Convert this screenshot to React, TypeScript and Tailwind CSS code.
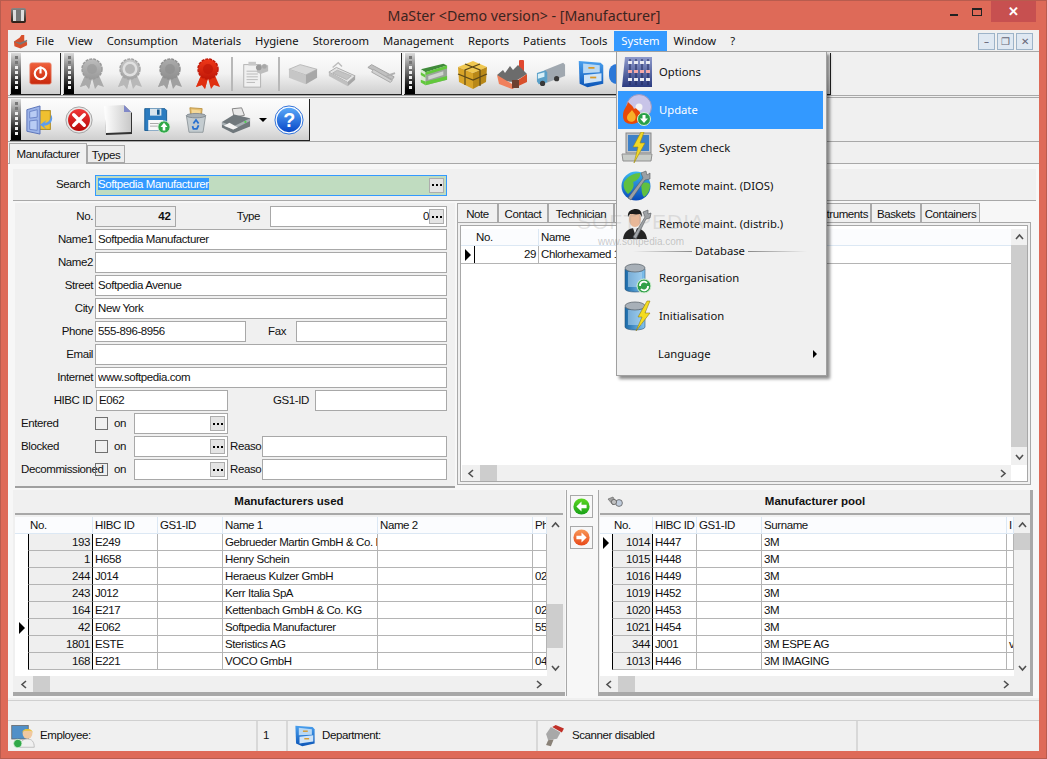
import type { ReactNode } from 'react'

// ─── Icons ────────────────────────────────────────────────────────────────────

function Svg({ s = 32, children }: { s?: number; children: ReactNode }) {
  return (
    <svg width={s} height={s} viewBox="0 0 32 32" className="shrink-0">
      {children}
    </svg>
  )
}

function Grad({ id, a, b, horizontal }: { id: string; a: string; b: string; horizontal?: boolean }) {
  return (
    <linearGradient id={id} x1="0" y1="0" x2={horizontal ? '1' : '0'} y2={horizontal ? '0' : '1'}>
      <stop offset="0" stopColor={a} />
      <stop offset="1" stopColor={b} />
    </linearGradient>
  )
}

function Power() {
  return (
    <Svg s={23}>
      <defs><Grad id="pw" a="#f0603c" b="#c8280c" /></defs>
      <rect x="1" y="1" width="30" height="30" rx="3" fill="url(#pw)" stroke="#e8a090" />
      <circle cx="16" cy="16" r="8" fill="none" stroke="#fff" strokeWidth="3" />
      <rect x="14.5" y="6" width="3" height="10" fill="#fff" />
    </Svg>
  )
}

function Ribbon({ id, a, b, tail, ring }: { id: string; a: string; b: string; tail: string; ring?: boolean }) {
  return (
    <Svg s={32}>
      <defs><Grad id={id} a={a} b={b} /></defs>
      <path d="M11 13 L4 29 L10 27 L13 31 L16 20 L19 31 L22 27 L28 29 L21 13Z" fill={tail} />
      <path d="M16 20 L13 31 L10 27 L4 29 L11 13Z" fill={tail} opacity="0.8" />
      <circle cx="16" cy="11" r="10" fill={`url(#${id})`} stroke={b} strokeWidth="1.5" strokeDasharray="3 1" />
      {ring && <circle cx="16" cy="11" r="7.5" fill="#e0e0e0" />}
      <circle cx="16" cy="11" r="5" fill={b} opacity="0.7" />
    </Svg>
  )
}

function ClipboardGray() {
  return (
    <Svg s={30}>
      <rect x="4" y="6" width="18" height="24" fill="#f0f0f0" stroke="#b0b0b0" />
      <path d="M7 13h12M7 16h12M7 19h12M7 22h12M7 25h9" stroke="#b8b8b8" />
      <rect x="9" y="3" width="8" height="4" fill="#c8c8c8" />
      <path d="M18 9l8-4 4 2v6l-8 3-4-2z" fill="#bdbdbd" />
      <circle cx="20" cy="9" r="3" fill="#9a9a9a" />
      <circle cx="26" cy="8" r="2.5" fill="#a8a8a8" />
    </Svg>
  )
}

function BoxGray() {
  return (
    <Svg s={30}>
      <path d="M1 11 L13 6 L31 11 L19 17Z" fill="#d8d8d8" stroke="#b8b8b8" />
      <path d="M1 11 L19 17 V27 L1 20Z" fill="#c6c6c6" />
      <path d="M19 17 L31 11 V20 L19 27Z" fill="#a8a8a8" />
    </Svg>
  )
}

function TrayGray() {
  return (
    <Svg s={30}>
      <path d="M2 14 L10 9 L30 18 L22 25Z" fill="#e4e4e4" stroke="#a8a8a8" />
      <path d="M6 15 L11 12 L26 18 L21 22Z" fill="#c4c4c4" stroke="#b4b4b4" />
      <path d="M2 14 L22 25 V29 L2 18Z" fill="#c0c0c0" />
      <path d="M22 25 L30 18 V22 L22 29Z" fill="#a6a6a6" />
      <path d="M6 9 L12 4 L16 8" fill="none" stroke="#bcbcbc" strokeWidth="1.5" />
    </Svg>
  )
}

function TweezersGray() {
  return (
    <Svg s={30}>
      <path d="M2 9 L28 22 L30 19 L6 6Z" fill="#c0c0c0" stroke="#a0a0a0" />
      <path d="M6 14 L26 25 L28 23 L8 11Z" fill="#d0d0d0" stroke="#a8a8a8" />
      <path d="M22 18 L31 15" stroke="#b0b0b0" strokeWidth="2" />
    </Svg>
  )
}

function GreenBox() {
  return (
    <Svg s={30}>
      <path d="M3 11 L27 5 L31 7 L8 14Z" fill="#3f8a3a" />
      <path d="M3 11 L8 14 V28 L3 25Z" fill="#d8e8d0" />
      <path d="M8 14 L31 7 V22 L8 28Z" fill="#9aa49a" />
      <path d="M8 14 L31 7 V10 L8 17Z" fill="#62c83c" />
      <path d="M8 24 L31 18 V22 L8 28Z" fill="#62c83c" />
      <path d="M11 18 L27 13 V17 L11 22Z" fill="#d0d4d0" />
      <path d="M3 14 L8 17 V20 L3 17Z" fill="#62c83c" />
      <path d="M3 22 L8 24 V28 L3 25Z" fill="#62c83c" />
    </Svg>
  )
}

function GoldBox() {
  return (
    <Svg s={32}>
      <path d="M2 9 L17 3 L31 9 L17 15Z" fill="#f0c850" />
      <path d="M2 9 L17 15 V31 L3 24Z" fill="#d8a428" />
      <path d="M17 15 L31 9 L30 24 L17 31Z" fill="#b88818" />
      <path d="M9 6 L24 12 V28 M24 6 L9 12 V27 M2 16 L17 22 L31 16" fill="none" stroke="#5c4818" strokeWidth="1.2" />
    </Svg>
  )
}

function Factory() {
  return (
    <Svg s={32}>
      <rect x="23" y="2" width="5" height="14" rx="1" fill="#e04830" />
      <path d="M1 17 L7 12 L9 15 L14 8 L17 12 L22 7 L27 12 L31 16 L18 24 L8 23Z" fill="#6c6c6c" />
      <path d="M1 17 L16 26 V31 L3 26Z" fill="#f0805c" />
      <path d="M16 26 L31 16 V24 L16 31Z" fill="#d8502c" />
      <rect x="16" y="22" width="7" height="8" fill="#6c4030" />
    </Svg>
  )
}

function Truck() {
  return (
    <Svg s={30}>
      <path d="M9 12 L29 4 L31 6 V18 L12 25Z" fill="#a0a8b0" />
      <path d="M1 15 L10 12 L12 14 V25 L3 27 L1 24Z" fill="#5aa0c8" />
      <path d="M2 16 L9 14 V19 L2 21Z" fill="#d8f0f8" />
      <circle cx="7" cy="26" r="2.8" fill="#383838" />
      <circle cx="22" cy="21" r="2.8" fill="#383838" />
    </Svg>
  )
}

function Cabinet({ s = 30 }: { s?: number }) {
  return (
    <Svg s={s}>
      <defs><Grad id={`cb${s}`} a="#4aa0ee" b="#0c56b8" /></defs>
      <path d="M2 1 L27 3 L30 6 V27 L12 31 L3 27Z" fill={`url(#cb${s})`} />
      <path d="M7 4 L26 6 V14 L7 15Z" fill="#b8d8f4" />
      <path d="M8 17 L28 15 V24 L8 27Z" fill="#cfe4f8" />
      <rect x="13" y="8" width="7" height="2" fill="#d89828" />
      <rect x="15" y="19" width="7" height="2" fill="#d89828" />
    </Svg>
  )
}

function Door() {
  return (
    <Svg s={30}>
      <rect x="13" y="6" width="14" height="20" fill="#f0c030" stroke="#a88418" />
      <path d="M2 5 L16 1 V31 L2 28Z" fill="#9cb4e8" stroke="#5870b8" />
      <path d="M5 7 L13 5 V13 L5 14Z M5 17 L13 16 V27 L5 26Z" fill="#b8ccf4" stroke="#6c84c8" />
      <path d="M28 10 C31 16 27 22 20 22 L23 26 L16 21 L23 16 L21 19 C25 19 28 15 28 10Z" fill="#5c9cf0" />
    </Svg>
  )
}

function RedX() {
  return (
    <Svg s={28}>
      <defs><Grad id="rx" a="#f03838" b="#b80808" /></defs>
      <circle cx="16" cy="16" r="15" fill="#e8e8e8" stroke="#9c9c9c" />
      <circle cx="16" cy="16" r="12.5" fill="url(#rx)" />
      <path d="M10 10 L22 22 M22 10 L10 22" stroke="#fff" strokeWidth="4" strokeLinecap="round" />
    </Svg>
  )
}

function Page() {
  return (
    <Svg s={32}>
      <defs><Grad id="pg" a="#ffffff" b="#c8c8c8" horizontal /></defs>
      <path d="M3 3 L23 2 L30 9 V30 L4 31Z" fill="#333" />
      <path d="M2 2 L22 1 L29 8 V28 L4 29Z" fill="url(#pg)" />
      <path d="M22 1 L29 8 L22 8Z" fill="#8088c8" />
    </Svg>
  )
}

function Floppy() {
  return (
    <Svg s={28}>
      <path d="M2 3 H25 L27 5 V28 H2Z" fill="#2c7cc0" stroke="#145890" />
      <rect x="8" y="3" width="13" height="8" fill="#d8e4ec" />
      <rect x="16" y="4" width="3" height="6" fill="#145890" />
      <rect x="6" y="16" width="17" height="12" fill="#f8f8f8" />
      <path d="M8 20h12M8 23h12" stroke="#a0a0a0" />
      <circle cx="24" cy="24" r="7" fill="#30a848" stroke="#e0f0e0" />
      <path d="M24 19 L28 24 H25.5 V28 H22.5 V24 H20Z" fill="#fff" />
    </Svg>
  )
}

function Bin() {
  return (
    <Svg s={28}>
      <path d="M9 2 L23 3 L22 12 H10Z" fill="#e8c070" stroke="#b89040" />
      <path d="M11 4 L21 5 L20 12 H12Z" fill="#f4d898" />
      <path d="M5 11 H27 L24 30 H8Z" fill="#c4ccd0" stroke="#8c9498" />
      <ellipse cx="16" cy="11" rx="11" ry="2.5" fill="#a8b0b4" stroke="#808890" />
      <path d="M13 20 L16 16 L19 20 M19 22 L17 26 H13 L12 23" fill="none" stroke="#2870d0" strokeWidth="2" />
    </Svg>
  )
}

function Printer() {
  return (
    <Svg s={30}>
      <path d="M12 4 L22 3 L25 11 L14 13Z" fill="#e8e8e8" stroke="#808080" />
      <path d="M1 18 L14 10 L31 14 V23 L13 30 L1 24Z" fill="#70787c" />
      <path d="M1 18 L13 23 L31 14 V17 L13 26 L1 21Z" fill="#a8b0b4" />
      <path d="M3 22 L13 26 L18 24 L9 19Z" fill="#f4f4f4" />
      <circle cx="26" cy="18" r="1.2" fill="#50d050" />
    </Svg>
  )
}

function Help() {
  return (
    <Svg s={30}>
      <defs><Grad id="hp" a="#5aa8f8" b="#0848c8" /></defs>
      <circle cx="16" cy="16" r="15" fill="#fff" stroke="#2068d8" />
      <circle cx="16" cy="16" r="13" fill="url(#hp)" />
      <text x="16" y="23" textAnchor="middle" fontSize="21" fontWeight="700" fill="#fff" fontFamily="Liberation Sans">?</text>
    </Svg>
  )
}

function Mixer() {
  return (
    <Svg s={32}>
      <defs><Grad id="mx" a="#8e9acb" b="#2c3c80" /></defs>
      <path d="M4 1 H31 V31 H1Z" fill="url(#mx)" />
      {[9, 15, 21, 27].map((x) => (
        <g key={x}>
          <path d={`M${x} 3 V29`} stroke="#20285c" strokeWidth="1" />
          <rect x={x - 2} y="5" width="4" height="3" fill="#e8eaf2" />
          <rect x={x - 2} y="14" width="4" height="3" fill="#f2a8a8" />
          <rect x={x - 2} y="22" width="4" height="3" fill="#e8eaf2" />
        </g>
      ))}
    </Svg>
  )
}

function CdFlame() {
  return (
    <Svg s={32}>
      <circle cx="18" cy="13" r="12.5" fill="#c8c4e8" stroke="#9c98c0" />
      <circle cx="18" cy="13" r="3.5" fill="#f4f4f4" />
      <path d="M2 22 C2 15 6 13 7 8 C10 11 12 12 13 15 C15 13 16 16 18 17 C22 21 20 30 11 30 C5 30 2 27 2 22Z" fill="#e84808" />
      <path d="M6 24 C6 20 9 19 11 16 C14 20 16 22 14 26 C12 29 6 28 6 24Z" fill="#f8b028" />
      <circle cx="23" cy="25" r="6.5" fill="#28a048" stroke="#d8f0d8" />
      <path d="M23 29 L27 24.5 H24.5 V21 H21.5 V24.5 H19Z" fill="#fff" />
    </Svg>
  )
}

function LaptopBolt() {
  return (
    <Svg s={32}>
      <rect x="5" y="1" width="25" height="20" fill="#c0c4c8" stroke="#888" />
      <rect x="7" y="3" width="21" height="16" fill="#3c80c8" />
      <path d="M1 22 H31 L30 29 H2Z" fill="#c8ccc8" stroke="#909090" />
      <path d="M20 0 L12 15 H17 L13 31 L24 11 H19 L23 0Z" fill="#f0d828" stroke="#a08c10" strokeWidth="0.6" />
    </Svg>
  )
}

function GlobeWrench() {
  return (
    <Svg s={32}>
      <defs><Grad id="gb" a="#3cb8f0" b="#0848b8" /></defs>
      <circle cx="15" cy="16" r="14.5" fill="url(#gb)" />
      <path d="M3 12 C7 6 13 3 19 3 C20 8 15 11 12 12 C14 16 11 21 7 24 C3 20 2 16 3 12Z M20 14 C24 12 28 12 29 15 C29 21 26 25 23 27 C20 24 21 18 20 14Z" fill="#60c040" />
      <path d="M7 28 L22 8 L20 3 L25 1 L26 5 L29 3 L29 9 L24 10 L10 30Z" fill="#9ca0a4" stroke="#585c60" strokeWidth="0.6" />
    </Svg>
  )
}

function PersonWrench() {
  return (
    <Svg s={32}>
      <path d="M2 31 C3 24 7 20 14 20 C21 20 25 24 26 31Z" fill="#242424" />
      <path d="M12 20 L14 26 L16 20Z" fill="#e8e8e8" />
      <ellipse cx="14" cy="11" rx="6" ry="8" fill="#e8b898" />
      <path d="M7 9 C6 3 11 1 15 1 C20 1 21 5 21 9 L19 6 C15 7 11 6 9 6Z" fill="#1c1c1c" />
      <path d="M12 29 L24 9 L22 4 L27 2 L27 6 L30 5 L29 10 L25 11 L15 31Z" fill="#a0a4a8" stroke="#505458" strokeWidth="0.6" />
    </Svg>
  )
}

function Db({ id }: { id: string }) {
  return (
    <>
      <defs><Grad id={id} a="#1868a8" b="#84c4f0" horizontal /></defs>
      <path d="M4 7 V27 C4 31 24 31 24 27 V7Z" fill={`url(#${id})`} stroke="#305878" strokeWidth="0.6" />
      <rect x="7" y="10" width="14" height="15" fill="#bcdcf4" opacity="0.55" />
      <ellipse cx="14" cy="6" rx="10" ry="4" fill="#a8b0b8" stroke="#606870" strokeWidth="0.8" />
    </>
  )
}

function DbSync() {
  return (
    <Svg s={32}>
      <Db id="db1" />
      <circle cx="23" cy="24" r="7" fill="#30a048" stroke="#d8f0d8" />
      <path d="M19 24 A4 4 0 0 1 26 21 M27 24 A4 4 0 0 1 20 27" fill="none" stroke="#fff" strokeWidth="1.8" />
    </Svg>
  )
}

function DbBolt() {
  return (
    <Svg s={32}>
      <Db id="db2" />
      <path d="M26 1 L17 17 H21 L15 31 L29 13 H24 L29 1Z" fill="#f4dc20" stroke="#806c10" strokeWidth="0.5" />
    </Svg>
  )
}

function Employee() {
  return (
    <Svg s={24}>
      <rect x="1" y="2" width="22" height="18" fill="#5090c8" stroke="#606060" />
      <path d="M12 31 C12 23 16 20 22 20 C28 20 31 24 31 31Z" fill="#f0f0f0" stroke="#b0b0b0" />
      <circle cx="22" cy="13" r="6.5" fill="#f0c8a0" />
      <path d="M15 12 C15 5 29 5 29 12 L27 9 H17Z" fill="#e8c030" />
      <circle cx="9" cy="26" r="5.5" fill="#30a848" stroke="#d8f0d8" />
    </Svg>
  )
}

function Scanner() {
  return (
    <Svg s={22}>
      <path d="M10 3 L24 11 L19 20 L6 22 L3 13Z" fill="#a8a8a8" />
      <path d="M12 3 L26 11 L29 5 L17 0Z" fill="#c03028" />
      <path d="M6 22 L3 29 L10 31 L14 21Z" fill="#8a8278" />
    </Svg>
  )
}

function Binoculars() {
  return (
    <svg width="16" height="12" viewBox="0 0 16 12">
      <path d="M1 3 L6 1 L9 6 L6 9Z" fill="#a0a0a0" stroke="#606060" strokeWidth="0.6" />
      <circle cx="12" cy="7" r="3.4" fill="#c0ccdc" stroke="#606060" strokeWidth="0.8" />
      <circle cx="7" cy="6" r="2.6" fill="#c0c0c0" stroke="#606060" strokeWidth="0.8" />
    </svg>
  )
}

function RoundArrow({ left }: { left?: boolean }) {
  const id = left ? 'ag' : 'ao'
  return (
    <svg width="17" height="17" viewBox="0 0 20 20">
      <defs><Grad id={id} a={left ? '#5cd820' : '#f89858'} b={left ? '#18a018' : '#e84818'} /></defs>
      <circle cx="10" cy="10" r="9.5" fill={`url(#${id})`} />
      {left ? (
        <path d="M4 10 L10 4 V8 H16 V12 H10 V16Z" fill="#fff" />
      ) : (
        <path d="M16 10 L10 4 V8 H4 V12 H10 V16Z" fill="#fff" />
      )}
    </svg>
  )
}

function Chevron({ dir }: { dir: 'up' | 'down' | 'left' | 'right' }) {
  const d = { up: 'M1 6 L4.5 2 L8 6', down: 'M1 2 L4.5 6 L8 2', left: 'M6 1 L2 4.5 L6 8', right: 'M2 1 L6 4.5 L2 8' }[dir]
  return (
    <svg width="9" height="9" viewBox="0 0 9 9">
      <path d={d} fill="none" stroke="#505050" strokeWidth="1.6" />
    </svg>
  )
}

function RowMark() {
  return <span className="h-0 w-0 border-y-[6px] border-l-[6px] border-y-transparent border-l-black" />
}

// ─── Small widgets ────────────────────────────────────────────────────────────

function DotsButton() {
  return (
    <span className="flex h-[15px] w-[15px] shrink-0 items-center justify-center gap-[2px] border border-[#adadad] bg-[#e4e4e4]">
      <i className="h-[2px] w-[2px] bg-black" />
      <i className="h-[2px] w-[2px] bg-black" />
      <i className="h-[2px] w-[2px] bg-black" />
    </span>
  )
}

function Input({ className = '', text, dots, right }: { className?: string; text?: string; dots?: boolean; right?: boolean }) {
  return (
    <div className={`flex h-[21px] shrink-0 items-center border border-[#a8a8a8] bg-white pr-[2px] pl-[2px] ${className}`}>
      <span className={`flex-1 truncate ${right ? 'text-right' : ''}`}>{text}</span>
      {dots && <DotsButton />}
    </div>
  )
}

function Label({ children, className = 'w-[76px] mr-[2px] text-right' }: { children: ReactNode; className?: string }) {
  return <span className={`shrink-0 whitespace-nowrap ${className}`}>{children}</span>
}

function FormRow({ children }: { children: ReactNode }) {
  return <div className="flex h-[21px] items-center">{children}</div>
}

function CheckRow({ label, reason }: { label: string; reason?: boolean }) {
  return (
    <FormRow>
      <span className="w-[78px] shrink-0 whitespace-nowrap pl-[4px]">{label}</span>
      <span className="relative h-[13px] w-[13px] shrink-0 border border-[#707070]" />
      <span className="ml-[6px] w-[20px] shrink-0">on</span>
      <Input className="w-[94px]" dots />
      {reason && (
        <>
          <span className="ml-[2px] w-[32px] shrink-0 whitespace-nowrap">Reaso</span>
          <Input className="w-[185px]" />
        </>
      )}
    </FormRow>
  )
}

function VScroll({ thumb, className = '' }: { thumb: string; className?: string }) {
  return (
    <div className={`flex w-[16px] shrink-0 flex-col items-center bg-[#f0f0f0] ${className}`}>
      <div className="flex h-[16px] shrink-0 items-center justify-center"><Chevron dir="up" /></div>
      <div className="relative w-full flex-1">
        <div className={`absolute inset-x-0 bg-[#cdcdcd] ${thumb}`} />
      </div>
      <div className="flex h-[16px] shrink-0 items-center justify-center"><Chevron dir="down" /></div>
    </div>
  )
}

function HScroll({ thumb }: { thumb: string }) {
  return (
    <div className="flex h-[16px] shrink-0 items-center bg-[#f0f0f0]">
      <div className="flex w-[18px] shrink-0 justify-center"><Chevron dir="left" /></div>
      <div className={`h-full shrink-0 bg-[#cdcdcd] ${thumb}`} />
      <div className="flex-1" />
      <div className="flex w-[16px] shrink-0 justify-center"><Chevron dir="right" /></div>
    </div>
  )
}

// ─── Grids ────────────────────────────────────────────────────────────────────

interface GridCol {
  label: string
  w: string
}

function DataGrid({
  markW,
  cols,
  rows,
  markRow,
}: {
  markW: string
  cols: GridCol[]
  rows: string[][]
  markRow: number
}) {
  return (
    <div className="flex-1 overflow-hidden bg-white">
      <div className="flex h-[17px] border-b border-[#dce8f4] bg-[#fbfcfe]">
        <div className={`shrink-0 ${markW}`} />
        {cols.map((c) => (
          <div key={c.label} className={`shrink-0 overflow-hidden whitespace-nowrap border-r border-[#dce8f4] pl-[2px] leading-[16px] ${c.w}`}>
            {c.label}
          </div>
        ))}
      </div>
      {rows.map((r, i) => (
        <div key={r[0]} className="flex h-[17px]">
          <div className={`flex shrink-0 items-center justify-center ${markW}`}>{i === markRow && <RowMark />}</div>
          {cols.map((c, j) => (
            <div
              key={c.label}
              className={
                j === 0
                  ? `shrink-0 border-r border-b border-l border-r-black border-b-[#b4b4b4] border-l-black bg-[#efefef] pr-[2px] text-right leading-[16px] ${c.w}`
                  : `shrink-0 overflow-hidden whitespace-nowrap border-r border-b border-[#b4b4b4] pl-[2px] leading-[16px] ${c.w}`
              }
            >
              {r[j]}
            </div>
          ))}
        </div>
      ))}
    </div>
  )
}

const usedCols: GridCol[] = [
  { label: 'No.', w: 'w-[65px]' },
  { label: 'HIBC ID', w: 'w-[65px]' },
  { label: 'GS1-ID', w: 'w-[65px]' },
  { label: 'Name 1', w: 'w-[155px]' },
  { label: 'Name 2', w: 'w-[155px]' },
  { label: 'Ph', w: 'w-[14px]' },
]

const usedRows = [
  ['193', 'E249', '', 'Gebrueder Martin GmbH & Co. K', '', ''],
  ['1', 'H658', '', 'Henry Schein', '', ''],
  ['244', 'J014', '', 'Heraeus Kulzer GmbH', '', '02'],
  ['243', 'J012', '', 'Kerr Italia SpA', '', ''],
  ['164', 'E217', '', 'Kettenbach GmbH & Co. KG', '', '02'],
  ['42', 'E062', '', 'Softpedia Manufacturer', '', '55'],
  ['1801', 'ESTE', '', 'Steristics AG', '', ''],
  ['168', 'E221', '', 'VOCO GmbH', '', '04'],
]

const poolCols: GridCol[] = [
  { label: 'No.', w: 'w-[41px]' },
  { label: 'HIBC ID', w: 'w-[44px]' },
  { label: 'GS1-ID', w: 'w-[65px]' },
  { label: 'Surname', w: 'w-[245px]' },
  { label: 'I', w: 'w-[7px]' },
]

const poolRows = [
  ['1014', 'H447', '', '3M', ''],
  ['1015', 'H448', '', '3M', ''],
  ['1016', 'H449', '', '3M', ''],
  ['1019', 'H452', '', '3M', ''],
  ['1020', 'H453', '', '3M', ''],
  ['1021', 'H454', '', '3M', ''],
  ['344', 'J001', '', '3M ESPE AG', 'v'],
  ['1013', 'H446', '', '3M IMAGING', ''],
]

// ─── Toolbars ─────────────────────────────────────────────────────────────────

function Handle() {
  return (
    <div className="ml-[1px] flex w-[10px] shrink-0 flex-col items-center gap-[2px] bg-gradient-to-b from-[#dcdcdc] via-[#606060] to-black pt-[3px]">
      {[0, 1, 2, 3, 4, 5, 6].map((i) => (
        <i key={i} className={i < 2 ? 'h-[3px] w-[3px] bg-[#777]' : 'h-[3px] w-[3px] bg-[#eee]'} />
      ))}
    </div>
  )
}

function Toolbar({ className, children }: { className: string; children: ReactNode }) {
  return (
    <div className={`flex h-[42px] shrink-0 items-center border-r border-b border-[#222] bg-gradient-to-b from-[#fcfcfc] via-[#f2f2f2] to-[#cfcfcf] ${className}`}>
      <div className="flex h-full self-stretch"><Handle /></div>
      {children}
    </div>
  )
}

function Sep({ className }: { className: string }) {
  return <span className={`h-[34px] w-[2px] shrink-0 bg-[#b8b8b8] ${className}`} />
}

// ─── Menu ─────────────────────────────────────────────────────────────────────

const menuBar = ['File', 'View', 'Consumption', 'Materials', 'Hygiene', 'Storeroom', 'Management', 'Reports', 'Patients', 'Tools', 'System', 'Window', '?']

function MenuItem({ icon, text, active }: { icon: ReactNode; text: string; active?: boolean }) {
  return (
    <div className={active ? 'flex h-[38px] items-center bg-[#3399ff] text-white' : 'flex h-[38px] items-center'}>
      <div className="flex w-[38px] shrink-0 justify-center">{icon}</div>
      <span className="ml-[3px]">{text}</span>
    </div>
  )
}

function SystemMenu() {
  return (
    <div className="absolute top-[50px] left-[615px] z-10 h-[325px] w-[211px] border border-[#a0a0a0] bg-[#f0f0f0] pt-[1px] pr-[3px] pl-[1px] font-['Noto_Sans',sans-serif] text-[11.25px] tracking-normal text-[#111] shadow-[3px_3px_3px_rgba(0,0,0,0.45)]">
      <MenuItem icon={<Mixer />} text="Options" />
      <MenuItem icon={<CdFlame />} text="Update" active />
      <MenuItem icon={<LaptopBolt />} text="System check" />
      <MenuItem icon={<GlobeWrench />} text="Remote maint. (DIOS)" />
      <MenuItem icon={<PersonWrench />} text="Remote maint. (distrib.)" />
      <div className="flex h-[16px] items-center pr-[16px] pl-[15px]">
        <span className="h-px flex-1 bg-gradient-to-r from-transparent to-[#888]" />
        <span className="px-[3px]">Database</span>
        <span className="h-px flex-1 bg-gradient-to-r from-[#888] to-transparent" />
      </div>
      <MenuItem icon={<DbSync />} text="Reorganisation" />
      <MenuItem icon={<DbBolt />} text="Initialisation" />
      <div className="flex h-[38px] items-center pr-[6px] pl-[40px]">
        <span className="flex-1">Language</span>
        <span className="h-0 w-0 border-y-[4px] border-l-[4px] border-y-transparent border-l-black" />
      </div>
    </div>
  )
}

// ─── Page ─────────────────────────────────────────────────────────────────────

export default function App() {
  return (
    <div className="relative flex h-[759px] w-[1047px] flex-col overflow-hidden border border-[#b85c4e] bg-[#de6a58] font-['Liberation_Sans',sans-serif] text-[11.5px] tracking-[-0.4px] text-[#111]">
      {/* Barra de título */}
      <div className="relative flex h-[29px] shrink-0 items-start tracking-normal">
        <div className="mt-[7px] ml-[10px] h-[15px] w-[15px] rounded-[2px] bg-gradient-to-b from-[#888] to-[#2c1c14] p-[2px]">
          <div className="h-full border-x-[3px] border-[#ddd] bg-[#777]" />
        </div>
        <div className="flex-1 pt-[5px] pl-[72px] text-center font-['Noto_Sans',sans-serif] text-[14.2px] leading-[20px] text-[#3a2420]">
          MaSter &lt;Demo version&gt; - [Manufacturer]
        </div>
        <div className="mt-[13px] mr-[14px] h-[2px] w-[8px] bg-[#222]" />
        <div className="mt-[7px] mr-[9px] h-[8px] w-[10px] border border-t-2 border-[#222]" />
        <div className="mr-[10px] flex h-[21px] w-[45px] items-center justify-center bg-[#c75050] text-[13px] font-bold text-white">✕</div>
      </div>

      {/* Área do cliente */}
      <div className="mx-[7px] flex flex-1 flex-col bg-[#f0f0f0]">
        {/* Menu */}
        <div className="mt-[1px] flex h-[20px] shrink-0 items-center font-['Noto_Sans',sans-serif] text-[11.25px] tracking-normal">
          <div className="flex w-[21px] shrink-0 justify-end pr-[1px]"><Svg s={15}><path d="M2 16 L14 8 L18 2 H24 V14 L30 18 V24 L16 31 L3 26Z" fill="#d8502c" /><path d="M2 16 L16 23 L30 16 V12 L16 18Z" fill="#787878" /></Svg></div>
          {menuBar.map((m) => (
            <span key={m} className={m === 'System' ? 'flex h-full items-center bg-[#3399ff] px-[7px] text-white' : 'px-[7px]'}>
              {m}
            </span>
          ))}
          <div className="ml-auto mr-[6px] flex gap-[2px]">
            {['–', '❐', '✕'].map((b) => (
              <span key={b} className="flex h-[17px] w-[17px] items-center justify-center border border-[#9db3c8] bg-[#dfe8f2] text-[10px] text-[#667]">{b}</span>
            ))}
          </div>
        </div>

        {/* Barra de ferramentas 1 */}
        <div className="flex h-[45px] shrink-0 items-start gap-[2px] border-y border-[#a8a8a8] pt-[1px] pl-[2px]">
          <Toolbar className="w-[51px]">
            <div className="ml-[8px]"><Power /></div>
          </Toolbar>
          <Toolbar className="w-[339px]">
            <div className="ml-[2px]"><Ribbon id="r1" a="#bdbdbd" b="#9a9a9a" tail="#aaaaaa" /></div>
            <div className="ml-[6px]"><Ribbon id="r2" a="#c8c8c8" b="#a4a4a4" tail="#b8b8b8" ring /></div>
            <div className="ml-[8px]"><Ribbon id="r3" a="#ababab" b="#8f8f8f" tail="#a0a0a0" /></div>
            <div className="ml-[6px]"><Ribbon id="r4" a="#f03818" b="#c01808" tail="#e03010" /></div>
            <Sep className="ml-[7px]" />
            <div className="ml-[7px]"><ClipboardGray /></div>
            <Sep className="ml-[8px]" />
            <div className="ml-[8px]"><BoxGray /></div>
            <div className="ml-[9px]"><TrayGray /></div>
            <div className="ml-[9px]"><TweezersGray /></div>
          </Toolbar>
          <Toolbar className="w-[427px]">
            <div className="ml-[3px]"><GreenBox /></div>
            <div className="ml-[8px]"><GoldBox /></div>
            <div className="ml-[8px]"><Factory /></div>
            <div className="ml-[8px]"><Truck /></div>
            <div className="ml-[11px]"><Cabinet s={28} /></div>
            <div className="ml-[4px] h-[20px] w-[8px] rounded-l-full bg-[#2c78d8]" />
          </Toolbar>
        </div>

        {/* Barra de ferramentas 2 */}
        <div className="mt-[1px] flex h-[45px] shrink-0 items-start border-y border-[#a8a8a8] pt-[1px] pl-[2px]">
          <Toolbar className="w-[300px]">
            <div className="ml-[4px]"><Door /></div>
            <div className="ml-[10px]"><RedX /></div>
            <div className="ml-[9px]"><Page /></div>
            <div className="ml-[9px]"><Floppy /></div>
            <div className="ml-[11px]"><Bin /></div>
            <div className="ml-[11px]"><Printer /></div>
            <span className="ml-[8px] h-0 w-0 border-x-[4px] border-t-[4px] border-x-transparent border-t-black" />
            <div className="ml-[7px]"><Help /></div>
          </Toolbar>
        </div>

        {/* Abas */}
        <div className="mt-[1px] flex h-[21px] shrink-0 items-end border-b border-[#a8a8a8] pl-[1px]">
          <div className="-mb-px h-[21px] w-[78px] border border-b-0 border-[#a8a8a8] bg-[#f0f0f0] pt-[2px] text-center">Manufacturer</div>
          <div className="h-[18px] w-[38px] border border-[#a8a8a8] bg-[#ececec] pt-[1px] text-center">Types</div>
        </div>

        {/* Conteúdo */}
        <div className="flex flex-1 flex-col bg-[#f7f7f7] pt-[5px] pr-[3px] pl-[5px]">
          {/* Busca */}
          <div className="flex h-[32px] shrink-0 items-center border-b border-[#a8a8a8] bg-[#f0f0f0] pt-[1px]">
            <span className="w-[77px] shrink-0 text-right">Search</span>
            <div className="ml-[5px] flex h-[21px] w-[352px] items-center border border-[#3399ff] bg-[#c0dcc0] pr-[2px] pl-[2px]">
              <span className="flex-1"><span className="bg-[#3399ff] text-white">Softpedia Manufacturer</span></span>
              <DotsButton />
            </div>
            <div className="flex-1" />
          </div>

          {/* Formulário + detalhes */}
          <div className="flex h-[287px] shrink-0 gap-[2px] pt-[2px]">
            <div className="ml-[2px] flex h-[285px] w-[440px] shrink-0 flex-col gap-[2px] border-b-2 border-[#a0a0a0] bg-[#f0f0f0] pt-[3px] pl-[2px]">
              <FormRow>
                <Label>No.</Label>
                <div className="flex h-[21px] w-[81px] shrink-0 items-center justify-end border border-[#a8a8a8] bg-[#eeeeee] pr-[4px] font-bold tracking-normal">42</div>
                <Label className="w-[84px] text-right">Type</Label>
                <Input className="ml-[10px] w-[177px]" text="0" right dots />
              </FormRow>
              <FormRow><Label>Name1</Label><Input className="w-[352px]" text="Softpedia Manufacturer" /></FormRow>
              <FormRow><Label>Name2</Label><Input className="w-[352px]" /></FormRow>
              <FormRow><Label>Street</Label><Input className="w-[352px]" text="Softpedia Avenue" /></FormRow>
              <FormRow><Label>City</Label><Input className="w-[352px]" text="New York" /></FormRow>
              <FormRow>
                <Label>Phone</Label>
                <Input className="w-[151px]" text="555-896-8956" />
                <Label className="w-[40px] text-right">Fax</Label>
                <Input className="ml-[10px] w-[151px]" />
              </FormRow>
              <FormRow><Label>Email</Label><Input className="w-[352px]" /></FormRow>
              <FormRow><Label>Internet</Label><Input className="w-[352px]" text="www.softpedia.com" /></FormRow>
              <FormRow>
                <Label className="w-[76px] mr-[3px] text-right">HIBC ID</Label>
                <Input className="w-[132px]" text="E062" />
                <Label className="w-[81px] text-right">GS1-ID</Label>
                <Input className="ml-[6px] w-[132px]" />
              </FormRow>
              <CheckRow label="Entered" />
              <CheckRow label="Blocked" reason />
              <CheckRow label="Decommissioned" reason />
            </div>

            <div className="mr-[5px] flex h-[282px] flex-1 flex-col">
              <div className="flex h-[19px] shrink-0 items-end">
                {[
                  ['Note', 'w-[41px]'],
                  ['Contact', 'w-[50px]'],
                  ['Technician', 'w-[66px]'],
                  ['', 'w-[191px]'],
                  ['Instruments', 'w-[66px] text-right'],
                  ['Baskets', 'w-[50px]'],
                  ['Containers', 'w-[59px]'],
                ].map(([t, w]) => (
                  <div key={t} className={`h-[19px] overflow-hidden whitespace-nowrap border border-b-0 border-[#a8a8a8] bg-[#f0f0f0] px-[2px] pt-[2px] text-center ${w}`}>{t}</div>
                ))}
              </div>
              <div className="flex flex-1 flex-col border border-[#a8a8a8] bg-[#f0f0f0] p-[2px]">
                <div className="flex flex-1 flex-col border border-[#a8a8a8] bg-white">
                  <div className="flex flex-1 pt-[3px]">
                    <div className="flex-1">
                      <div className="flex h-[17px] border-b border-[#dce8f4] bg-[#fbfcfe]">
                        <div className="w-[13px]" />
                        <div className="w-[65px] border-r border-[#dce8f4] pl-[2px]">No.</div>
                        <div className="pl-[2px]">Name</div>
                      </div>
                      <div className="flex h-[18px] border-b border-[#b4b4b4]">
                        <div className="flex w-[13px] items-center justify-center"><RowMark /></div>
                        <div className="w-[65px] border-r border-l border-r-[#b4b4b4] border-l-black pr-[2px] text-right">29</div>
                        <div className="pl-[2px]">Chlorhexamed 1% Gel</div>
                      </div>
                    </div>
                    <VScroll thumb="top-0 bottom-[2px]" />
                  </div>
                  <div className="mr-[16px] ml-[1px]"><HScroll thumb="w-[17px]" /></div>
                </div>
              </div>
            </div>
          </div>

          {/* Listas inferiores */}
          <div className="mt-[2px] mr-[3px] flex h-[206px] shrink-0">
            <div className="flex w-[552px] shrink-0 flex-col border-b-4 border-[#a8a8a8] bg-[#f0f0f0] pr-[2px] pl-[2px]">
              <div className="flex h-[25px] shrink-0 items-center justify-center border-b-2 border-[#a8a8a8] font-bold tracking-normal">Manufacturers used</div>
              <div className="flex flex-1">
                <div className="flex flex-1 flex-col pt-[2px]">
                  <DataGrid markRow={5} markW="w-[13px]" cols={usedCols} rows={usedRows} />
                  <HScroll thumb="w-[17px]" />
                </div>
                <VScroll className="mt-[2px] mb-[16px]" thumb="top-[71px] h-[44px]" />
              </div>
            </div>
            <div className="ml-[1px] flex w-[33px] shrink-0 flex-col gap-[8px] border-x border-[#a8a8a8] pt-[5px] pl-[3px]">
              <span className="flex h-[23px] w-[23px] items-center justify-center border border-[#a8a8a8]"><RoundArrow left /></span>
              <span className="flex h-[23px] w-[23px] items-center justify-center border border-[#a8a8a8]"><RoundArrow /></span>
            </div>
            <div className="flex flex-1 flex-col border-r-[3px] border-b-4 border-[#a8a8a8] bg-[#f0f0f0] pl-[1px]">
              <div className="relative flex h-[25px] shrink-0 items-center justify-center border-b-2 border-[#a8a8a8] font-bold tracking-normal">
                <span className="absolute top-[6px] left-[7px]"><Binoculars /></span>
                Manufacturer pool
              </div>
              <div className="flex flex-1">
                <div className="flex flex-1 flex-col pt-[2px]">
                  <DataGrid markRow={0} markW="w-[12px]" cols={poolCols} rows={poolRows} />
                  <HScroll thumb="w-[17px]" />
                </div>
                <VScroll className="mt-[2px] mb-[16px]" thumb="top-0 h-[17px]" />
              </div>
            </div>
          </div>

          <div className="flex-1" />
        </div>

        {/* Rodapé */}
        <div className="h-[3px] shrink-0 border-b border-[#d0d0d0]" />
        <div className="h-[20px] shrink-0 border-b border-[#d0d0d0]" />
        <div className="flex h-[30px] shrink-0 items-center">
          <div className="flex h-full w-[250px] items-center gap-[5px] border-r-2 border-[#d8d8d8] pl-[3px]"><Employee /><span>Employee:</span></div>
          <div className="flex h-full w-[30px] items-center border-r-2 border-[#d8d8d8] pl-[5px]">1</div>
          <div className="flex h-full w-[250px] items-center gap-[6px] border-r-2 border-[#d8d8d8] pl-[6px]"><Cabinet s={22} /><span>Department:</span></div>
          <div className="flex h-full w-[320px] items-center gap-[6px] border-r-2 border-[#d8d8d8] pl-[6px]"><Scanner /><span>Scanner disabled</span></div>
        </div>
      </div>
      <div className="h-[7px] shrink-0" />

      <SystemMenu />

      {/* Marca d'água por cima da janela */}
      <span className="pointer-events-none absolute top-[205px] left-[576px] z-20 text-[21px] tracking-[1px] text-[#9a9a9a]/25">SOFTPEDIA</span>
      <span className="pointer-events-none absolute top-[233px] left-[597px] z-20 text-[10px] tracking-normal text-[#8a8a8a]/45">www.softpedia.com</span>
    </div>
  )
}
